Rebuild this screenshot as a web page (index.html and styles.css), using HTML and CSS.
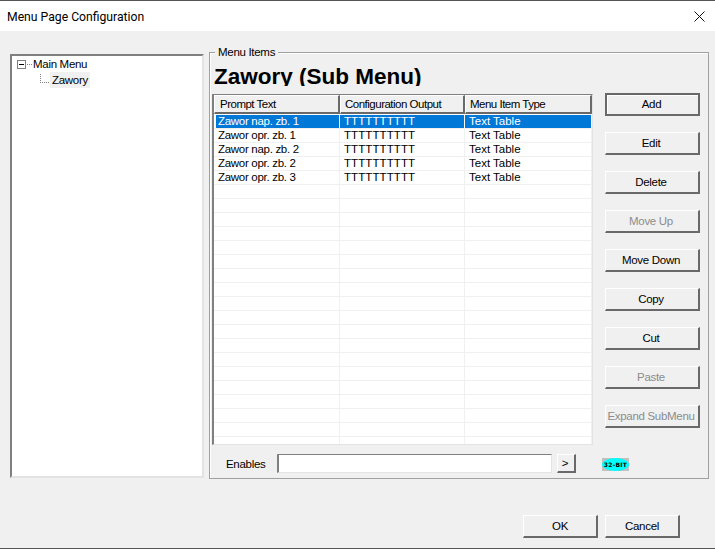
FILE: index.html
```html
<!DOCTYPE html>
<html lang="en">

<head>
    <meta charset="UTF-8">
    <meta name="viewport" content="width=device-width, initial-scale=1.0">
    <title>Menu Page Configuration</title>
    <link rel="stylesheet" href="styles.css">
</head>

<body>
    <div class="window">
        <div class="titlebar">
            <span class="title-text">Menu Page Configuration</span>
            <svg class="close-icon" width="11" height="11" viewBox="0 0 11 11">
                <path d="M0.5 0.5L10.5 10.5M10.5 0.5L0.5 10.5" stroke="#111" stroke-width="1" fill="none" />
            </svg>
        </div>

        <div class="content">
            <div class="tree">
                <div class="tree-row">
                    <svg class="tree-toggle" width="16" height="9" viewBox="0 0 16 9">
                        <rect x="0.5" y="0.5" width="8" height="8" fill="#fff" stroke="#808080" />
                        <path d="M2 4.5H7" stroke="#000" />
                        <path d="M10 4.5H11M12 4.5H13M14 4.5H15" stroke="#808080" />
                    </svg>
                    <span class="tree-label">Main Menu</span>
                </div>
                <div class="tree-row tree-child">
                    <svg class="tree-line" width="10" height="9" viewBox="0 0 10 9">
                        <path d="M0.5 0V1M0.5 2V3M0.5 4V5M0.5 6V7M0.5 8V9M2 8.5H3M4 8.5H5M6 8.5H7M8 8.5H9" stroke="#808080" />
                    </svg>
                    <span class="tree-label selected">Zawory</span>
                </div>
            </div>

            <div class="group">
                <span class="group-legend">Menu Items</span>
                <div class="group-heading">Zawory (Sub Menu)</div>

                <div class="group-body">
                    <div class="list">
                        <div class="list-header">
                            <div class="col-head">Prompt Text</div>
                            <div class="col-head">Configuration Output</div>
                            <div class="col-head">Menu Item Type</div>
                        </div>
                        <div class="list-rows">
                            <div class="row active">
                                <div class="cell">Zawor nap. zb. 1</div>
                                <div class="cell cell-output">TTTTTTTTTT</div>
                                <div class="cell cell-type">Text Table</div>
                            </div>
                            <div class="row">
                                <div class="cell">Zawor opr. zb. 1</div>
                                <div class="cell cell-output">TTTTTTTTTT</div>
                                <div class="cell cell-type">Text Table</div>
                            </div>
                            <div class="row">
                                <div class="cell">Zawor nap. zb. 2</div>
                                <div class="cell cell-output">TTTTTTTTTT</div>
                                <div class="cell cell-type">Text Table</div>
                            </div>
                            <div class="row">
                                <div class="cell">Zawor opr. zb. 2</div>
                                <div class="cell cell-output">TTTTTTTTTT</div>
                                <div class="cell cell-type">Text Table</div>
                            </div>
                            <div class="row">
                                <div class="cell">Zawor opr. zb. 3</div>
                                <div class="cell cell-output">TTTTTTTTTT</div>
                                <div class="cell cell-type">Text Table</div>
                            </div>
                            <div class="row"><div class="cell"></div><div class="cell"></div><div class="cell"></div></div>
                            <div class="row"><div class="cell"></div><div class="cell"></div><div class="cell"></div></div>
                            <div class="row"><div class="cell"></div><div class="cell"></div><div class="cell"></div></div>
                            <div class="row"><div class="cell"></div><div class="cell"></div><div class="cell"></div></div>
                            <div class="row"><div class="cell"></div><div class="cell"></div><div class="cell"></div></div>
                            <div class="row"><div class="cell"></div><div class="cell"></div><div class="cell"></div></div>
                            <div class="row"><div class="cell"></div><div class="cell"></div><div class="cell"></div></div>
                            <div class="row"><div class="cell"></div><div class="cell"></div><div class="cell"></div></div>
                            <div class="row"><div class="cell"></div><div class="cell"></div><div class="cell"></div></div>
                            <div class="row"><div class="cell"></div><div class="cell"></div><div class="cell"></div></div>
                            <div class="row"><div class="cell"></div><div class="cell"></div><div class="cell"></div></div>
                            <div class="row"><div class="cell"></div><div class="cell"></div><div class="cell"></div></div>
                            <div class="row"><div class="cell"></div><div class="cell"></div><div class="cell"></div></div>
                            <div class="row"><div class="cell"></div><div class="cell"></div><div class="cell"></div></div>
                            <div class="row"><div class="cell"></div><div class="cell"></div><div class="cell"></div></div>
                            <div class="row"><div class="cell"></div><div class="cell"></div><div class="cell"></div></div>
                            <div class="row"><div class="cell"></div><div class="cell"></div><div class="cell"></div></div>
                            <div class="row"><div class="cell"></div><div class="cell"></div><div class="cell"></div></div>
                            <div class="row"><div class="cell"></div><div class="cell"></div><div class="cell"></div></div>
                        </div>
                    </div>

                    <div class="side-buttons">
                        <button class="btn btn-default">Add</button>
                        <button class="btn">Edit</button>
                        <button class="btn">Delete</button>
                        <button class="btn" disabled>Move Up</button>
                        <button class="btn">Move Down</button>
                        <button class="btn">Copy</button>
                        <button class="btn">Cut</button>
                        <button class="btn" disabled>Paste</button>
                        <button class="btn" disabled>Expand SubMenu</button>
                    </div>
                </div>

                <div class="enables-row">
                    <label class="enables-label">Enables</label>
                    <div class="enables-input"></div>
                    <button class="btn btn-small">&gt;</button>
                    <span class="bit-badge"><span class="bit-oval">32-BIT</span></span>
                </div>
            </div>
        </div>

        <div class="footer">
            <button class="btn btn-footer">OK</button>
            <button class="btn btn-footer">Cancel</button>
        </div>
    </div>
</body>

</html>
```

FILE: styles.css
```css
* {
    box-sizing: border-box;
}

html,
body {
    margin: 0;
    padding: 0;
}

body {
    font-family: "Liberation Sans", Arial, sans-serif;
    font-size: 11.5px;
    letter-spacing: -0.3px;
    color: #000;
    background: #f0f0f0;
}

.window {
    width: 715px;
    height: 549px;
    overflow: hidden;
    display: flex;
    flex-direction: column;
    background: #f0f0f0;
    border-top: 1px solid #555;
    border-bottom: 1px solid #555;
}

.titlebar {
    height: 30px;
    flex-shrink: 0;
    display: flex;
    align-items: center;
    justify-content: space-between;
    padding: 1px 10px 0 7px;
    background: #fff;
}

.title-text {
    font-family: Roboto, sans-serif;
    font-size: 12.2px;
    letter-spacing: 0;
}

.content {
    display: flex;
    align-items: flex-start;
    gap: 5px;
    padding: 21px 0 0 10px;
}

/* tree on the left */
.tree {
    width: 194px;
    height: 424px;
    margin-top: 2px;
    padding: 0 0 0 5px;
    background: #fff;
    border-style: solid;
    border-width: 2px;
    border-color: #808080 #e3e3e3 #e3e3e3 #808080;
}

.tree-row {
    height: 16px;
    display: flex;
    align-items: center;
}

.tree-label {
    line-height: 16px;
}

.tree-child {
    padding-left: 23px;
}

.tree-line {
    margin: 0 0 4px 0;
}

.selected {
    padding: 0 2px;
    background: #f0f0f0;
}

/* group box */
.group {
    position: relative;
    width: 500px;
    height: 427px;
    padding: 13px 0 0 2px;
    border: 1px solid #a0a0a0;
    box-shadow: inset 1px 1px 0 #fff;
}

.group-legend {
    position: absolute;
    left: 5px;
    top: -7px;
    padding: 0 3px;
    line-height: 13px;
    background: #f0f0f0;
}

.group-heading {
    height: 20px;
    padding-left: 2px;
    overflow: hidden;
    font-size: 22.5px;
    font-weight: bold;
    letter-spacing: 0;
    line-height: 22px;
}

.group-body {
    display: flex;
    align-items: flex-start;
    gap: 12px;
    margin-top: 8px;
}

/* list */
.list {
    width: 381px;
    height: 351px;
    overflow: hidden;
    background: #fff;
    border-style: solid;
    border-width: 1px 1px 1px 2px;
    border-color: #808080 #e3e3e3 #e3e3e3 #808080;
}

.list-header {
    display: grid;
    grid-template-columns: 126px 125px 127px;
    height: 18px;
    background: #f0f0f0;
}

.col-head {
    padding: 1px 0 0 5px;
    letter-spacing: -0.5px;
    line-height: 15px;
    background: #f0f0f0;
    border-style: solid;
    border-width: 1px 2px 2px 1px;
    border-color: #fff #696969 #696969 #fff;
}

.col-head+.col-head {
    padding-left: 4px;
}

.list-rows {
    padding-top: 2px;
}

.row {
    display: grid;
    grid-template-columns: 126px 125px 127px;
    height: 14px;
    border-bottom: 1px solid #f0f0f0;
}

.cell {
    padding-left: 5px;
    line-height: 13px;
    white-space: nowrap;
    border-right: 1px solid #f0f0f0;
}

.cell:first-child {
    margin-left: 2px;
    padding-left: 2px;
}

.cell-output {
    padding-left: 4px;
    letter-spacing: 0.1px;
}

.cell-type {
    padding-left: 4px;
    letter-spacing: 0;
}

.row.active {
    color: #fff;
}

.row.active .cell {
    background: #0078d7;
    border-right-color: #fff;
}

/* buttons */
.side-buttons {
    display: flex;
    flex-direction: column;
    gap: 16px;
    margin-top: -1px;
}

.btn {
    width: 95px;
    height: 23px;
    padding: 0 2px 1px 0;
    font-family: inherit;
    font-size: 11.5px;
    letter-spacing: -0.3px;
    color: #000;
    background: #f0f0f0;
    border-style: solid;
    border-width: 1px 2px 2px 1px;
    border-color: #fff #696969 #696969 #fff;
}

.btn:disabled {
    color: #8c8c8c;
}

.btn-default {
    border: 2px solid #696969;
    box-shadow: inset 1px 1px 0 #fff;
}

.enables-row {
    display: flex;
    align-items: center;
    margin-top: 9px;
    padding-left: 14px;
}

.enables-label {
    width: 51px;
}

.enables-input {
    width: 275px;
    height: 19px;
    background: #fff;
    border-style: solid;
    border-width: 1px 1px 1px 2px;
    border-color: #808080 #e3e3e3 #e3e3e3 #808080;
}

.btn-small {
    width: 19px;
    height: 19px;
    margin-left: 5px;
}

.bit-badge {
    display: flex;
    width: 27px;
    height: 13px;
    margin: 1px 0 0 26px;
    background: #c0c0c0;
}

.bit-oval {
    width: 100%;
    font-family: "DejaVu Sans", sans-serif;
    font-size: 6px;
    font-weight: bold;
    letter-spacing: 0.3px;
    line-height: 13px;
    text-align: center;
    white-space: nowrap;
    background: #00ffff;
    border-radius: 50%;
}

.footer {
    display: flex;
    justify-content: flex-end;
    gap: 7px;
    margin-top: 36px;
    padding-right: 35px;
}

.btn-footer {
    width: 75px;
    padding-right: 0;
}
```
